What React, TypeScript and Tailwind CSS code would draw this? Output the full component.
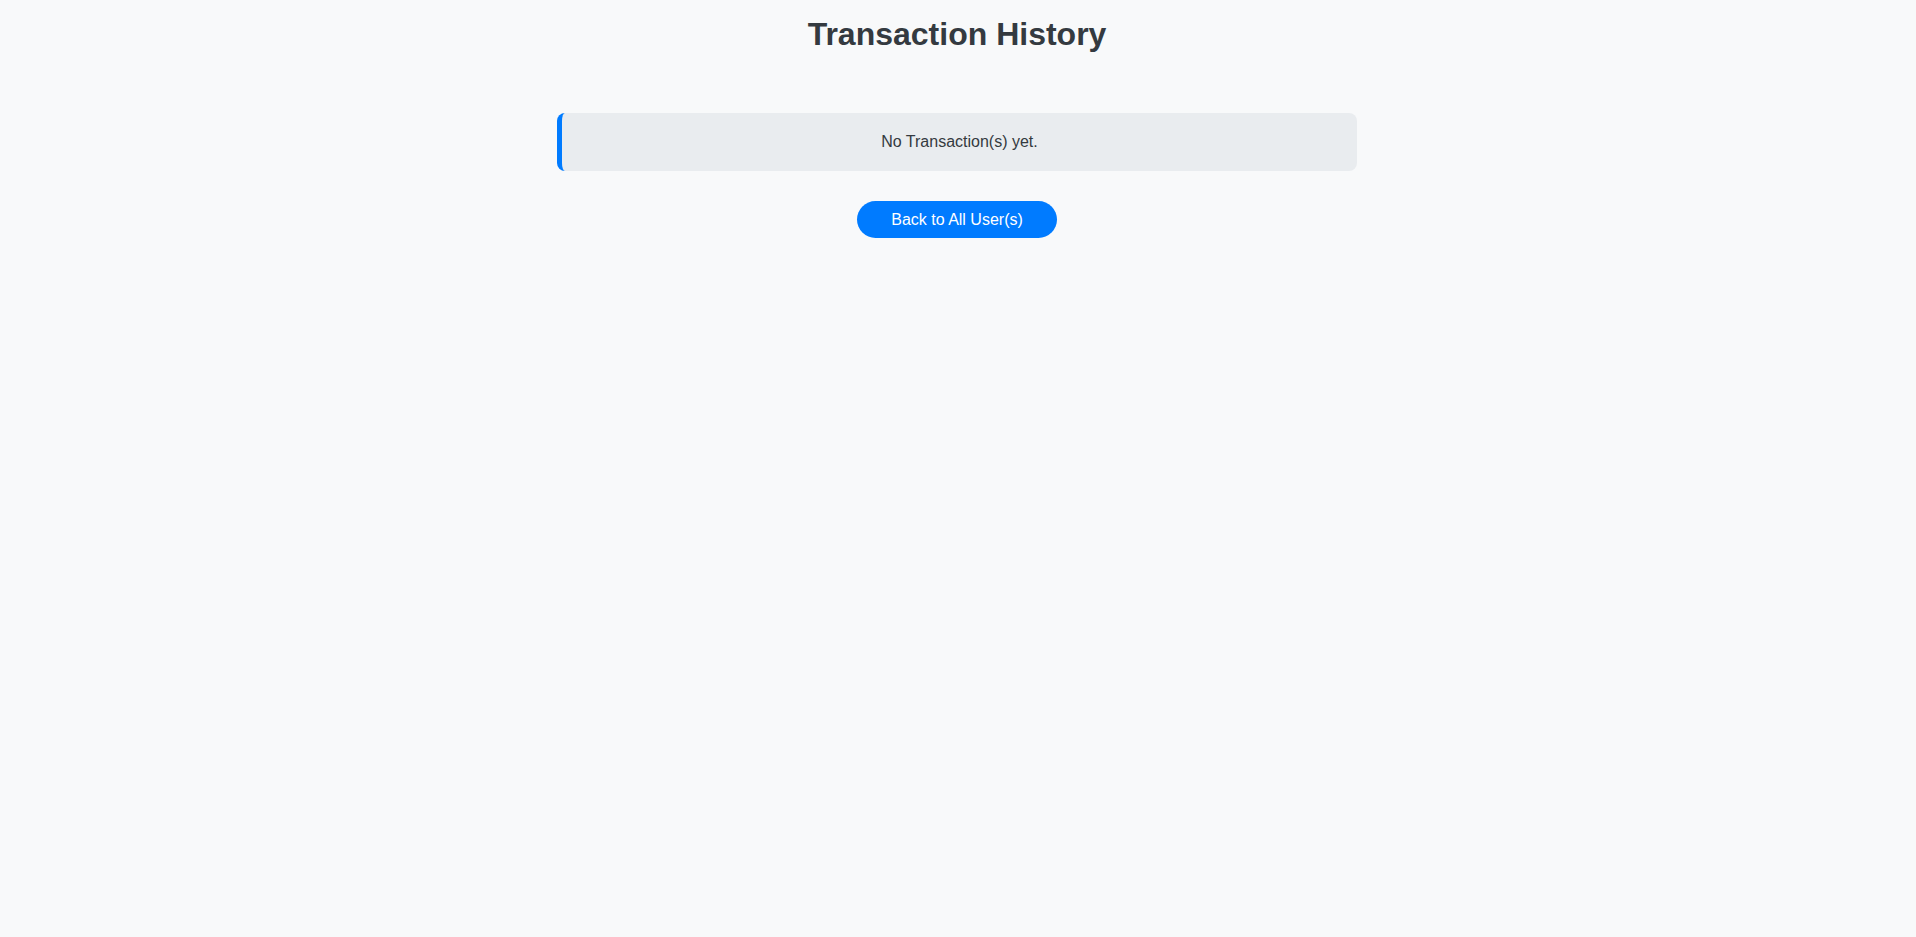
const App = () => {
    return (
        <div className="min-h-[937px] w-full bg-[#f8f9fa] font-['Liberation_Sans',Arial,sans-serif] text-[#333]">
            <div className="flex flex-col items-center pt-4 pr-[2px]">
                <h1 className="text-[32px] leading-[37px] font-bold text-[#343a40]">
                    Transaction History
                </h1>
                <div className="mt-[60px] w-[800px] rounded-lg border-l-[5px] border-[#007bff] bg-[#e9ecef] py-5 text-center text-base leading-[18px] text-[#343a40]">
                    No Transaction(s) yet.
                </div>
                <button
                    className="mt-[30px] h-[37px] w-[200px] rounded-full bg-[#007bff] text-base text-white"
                    onClick={() => null}
                >
                    Back to All User(s)
                </button>
            </div>
        </div>
    );
};

export default App;
